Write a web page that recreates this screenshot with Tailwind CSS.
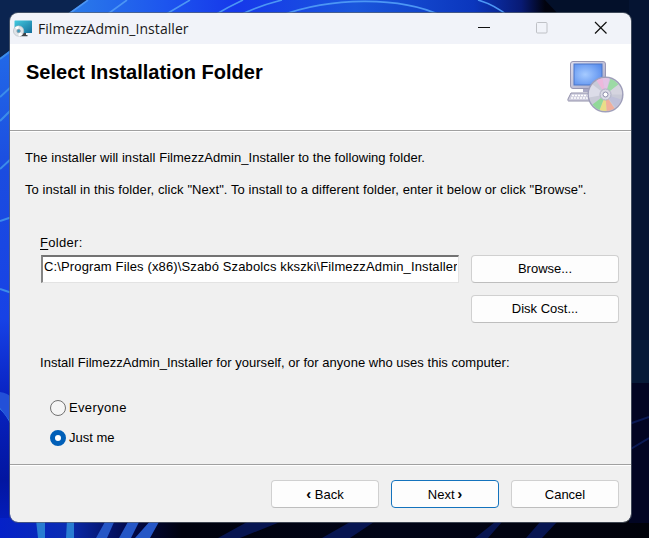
<!DOCTYPE html>
<html lang="en">
<head>
<meta charset="utf-8">
<title>FilmezzAdmin_Installer</title>
<script src="https://cdn.jsdelivr.net/npm/@tailwindcss/browser@4"></script>
</head>
<body class="relative w-[649px] h-[538px] overflow-hidden bg-[#03102a] font-['Liberation_Sans',Arial,sans-serif] text-[13px] text-black">
<!-- desktop wallpaper -->
<svg class="absolute inset-0" width="649" height="538" viewBox="0 0 649 538">
  <defs>
    <linearGradient id="top" x1="70" x2="545" y1="0" y2="0" gradientUnits="userSpaceOnUse"><stop offset="0" stop-color="#2a7be9"/><stop offset=".2" stop-color="#1d55ee"/><stop offset=".35" stop-color="#1638ea"/><stop offset=".6" stop-color="#1a56dc"/><stop offset=".85" stop-color="#0b36bd"/><stop offset=".95" stop-color="#081a74"/><stop offset="1" stop-color="#01030f"/></linearGradient>
    <linearGradient id="left" x1="0" x2="0" y1="50" y2="538" gradientUnits="userSpaceOnUse"><stop offset="0" stop-color="#2269e8"/><stop offset=".25" stop-color="#1b4ce0"/><stop offset=".55" stop-color="#1742e6"/><stop offset=".7" stop-color="#0924c4"/><stop offset=".88" stop-color="#0215a0"/><stop offset="1" stop-color="#0420c6"/></linearGradient>
    <linearGradient id="bot" x1="0" x2="649" y1="0" y2="0" gradientUnits="userSpaceOnUse"><stop offset="0" stop-color="#0521c8"/><stop offset=".1" stop-color="#0a2cb4"/><stop offset=".2" stop-color="#02094a"/><stop offset=".28" stop-color="#00020e"/><stop offset=".6" stop-color="#010417"/><stop offset="1" stop-color="#01020a"/></linearGradient>
  </defs>
  <path d="M0 0H100V60H0z" fill="#0b2450"/>
  <path d="M88 0H545L560 16H64z" fill="url(#top)"/>
  <g fill="none" stroke="#4c96f4" stroke-width="1.600"><path d="M88 0L66 16M127 0L105 16M190 0L163 16M243 0Q228 7 213 16M282 0Q258 6 238 16M280 16C330 -3 400 -4 442 16M478 0Q495 5 508 16"/></g>
  <path d="M0 58L12 49V538H0z" fill="url(#left)"/>
  <g fill="none" stroke="#3c8cea" stroke-width="2"><path d="M0 59L12 50M0 97L12 86M0 121L12 109M0 169L12 158M0 221L12 217M0 289L12 293M0 408Q7 414 12 425"/></g>
  <path d="M0 392Q8 393 12 398V424L0 408z" fill="#2350d8"/>
  <path d="M0 518H649V538H0z" fill="url(#bot)"/>
  <path d="M36 520H45V538H38zM67 520H74V538H66z" fill="#287cd2"/>
  <path d="M106 520H115L107 538H96zM129 520H140L131 538H119zM151 520H160L150 538H135z" fill="#2556c6"/>
  <path d="M247 522H280L240 538H218zM350 522H374L350 538H322zM495 522H502L488 538H475zM540 522H557L542 538H526z" fill="#071551"/>
  <path d="M629 0H649V383L629 382z" fill="#051432"/>
  <path d="M629 340H649V383H629z" fill="#071a38"/>
  <path d="M629 383H649V523H629z" fill="#020523"/>
  <path d="M629 450L649 438M629 424L649 417" stroke="#0b1a55" stroke-width="2"/>
</svg>

<main class="relative ml-[10px] mt-[13px] w-[621px] h-[509px] rounded-lg overflow-hidden bg-[#f0f0f0] flex flex-col outline outline-[#59636e]/70">
  <header class="h-[31px] shrink-0 bg-[#f1f3f9] flex items-center">
    <svg class="ml-[3px] shrink-0" width="20" height="18" viewBox="0 0 20 18">
      <defs><linearGradient id="scr" x1="0" y1="0" x2="1" y2="1"><stop stop-color="#43cbe0"/><stop offset="1" stop-color="#146f9c"/></linearGradient></defs>
      <rect x="1.500" y=".5" width="17.500" height="12.500" rx=".6" fill="url(#scr)"/>
      <path d="M9 13h4v2h1.500v1.200H7z" fill="#404449"/>
      <circle cx="5.600" cy="11" r="5.200" fill="#dfe3e7" stroke="#b1bac2" stroke-width=".6"/>
      <path d="M5.600 11L2 7.500A5 5 0 0 1 5.600 6zM5.600 11l4 3.400A5 5 0 0 1 5.600 16z" fill="#fff"/>
      <circle cx="5.600" cy="11" r="1.700" fill="#389abd" stroke="#8798a6" stroke-width=".8"/>
    </svg>
    <span class="ml-[5px] font-['Open_Sans',sans-serif] text-[14px] tracking-[0.05px] leading-5 text-[#191919] whitespace-nowrap">FilmezzAdmin_Installer</span>
    <svg class="ml-auto mr-[24px] mb-[1px] shrink-0" width="130" height="14" viewBox="0 0 130 14" fill="none">
      <path d="M1 6.500H13" stroke="#111"/>
      <rect x="59.500" y="1.500" width="10.500" height="10.500" rx="1" stroke="#bfc1c6"/>
      <path d="M118 1L129.500 12.500M129.500 1L118 12.500" stroke="#111" stroke-width="1.200"/>
    </svg>
  </header>

  <section class="h-[86px] shrink-0 bg-white flex justify-between pl-4 pr-[7px]">
    <h1 class="pt-[16px] text-[20px] leading-6 font-bold whitespace-nowrap">Select Installation Folder</h1>
    <svg class="mt-[15px]" width="58" height="56" viewBox="0 0 58 56">
      <defs>
        <radialGradient id="mon" cx=".4" cy=".5" r=".7"><stop stop-color="#a6cbff"/><stop offset="1" stop-color="#568bed"/></radialGradient>
        <linearGradient id="bez" x1="0" y1="0" x2="1" y2="1"><stop stop-color="#deddec"/><stop offset="1" stop-color="#a8a8c5"/></linearGradient>
      </defs>
      <path d="M17 28h19v5H17z" fill="#a9a8c4"/>
      <rect x="4.500" y="2.500" width="35" height="27" rx="2.500" fill="url(#bez)" stroke="#9897b3"/>
      <rect x="8" y="5" width="28" height="21" fill="url(#mon)" stroke="#4d76c8"/>
      <path d="M5 34H33V42H2.500Q1.500 42 2 40z" fill="#cfcede" stroke="#9291aa"/>
      <path d="M6 36.500H24M5 39H24" stroke="#fff" stroke-width="1.700" stroke-dasharray="2 1"/>
      <circle cx="39.500" cy="35.500" r="17.300" fill="#c9cad7" stroke="#9f9fba" stroke-width="1.500"/>
      <g transform="translate(39.500 35.500)">
        <path d="M0 0L-9 -14A16.600 16.600 0 0 1 -3 -16.300z" fill="#edb8dc"/>
        <path d="M0 0L-3 -16.300A16.600 16.600 0 0 1 4 -16z" fill="#e3c3e5"/>
        <path d="M0 0L5 -15.800A16.600 16.600 0 0 1 13 -10z" fill="#9cdaa5"/>
        <path d="M0 0L13 -10A16.600 16.600 0 0 1 16.600 0z" fill="#d5d4df"/>
        <path d="M0 0L15.800 5A16.600 16.600 0 0 1 10 13z" fill="#bfc0d9"/>
        <path d="M0 0L9 14A16.600 16.600 0 0 1 1 16.500z" fill="#f1ae9b"/>
        <path d="M0 0L1 16.500A16.600 16.600 0 0 1 -6 15.500z" fill="#e9dd88"/>
        <path d="M0 0L-6 15.500A16.600 16.600 0 0 1 -13 10z" fill="#91d998"/>
        <path d="M0 0L-16.400 3A16.600 16.600 0 0 1 -13 -10z" fill="#dcdce8"/>
      </g>
      <circle cx="39.500" cy="35.500" r="5.500" fill="#d8d9e4" stroke="#b0b1c6"/>
      <circle cx="39.500" cy="35.500" r="2.500" fill="#fff" stroke="#8c8dab"/>
    </svg>
  </section>
  <div class="h-[2px] shrink-0 bg-white border-t border-[#a0a0a0]"></div>

  <section class="h-[332px] shrink-0 pl-[15px] pr-3 flex flex-col">
    <p class="mt-[18px] leading-4 tracking-[0.045px] whitespace-nowrap">The installer will install FilmezzAdmin_Installer to the following folder.</p>
    <p class="mt-4 leading-4 tracking-[0.082px] whitespace-nowrap">To install in this folder, click "Next". To install to a different folder, enter it below or click "Browse".</p>
    <div class="mt-[37px] ml-[15px] leading-4 tracking-[0.3px]"><span class="underline underline-offset-2">F</span>older:</div>
    <div class="mt-[4px] ml-[16px] flex justify-between">
      <div class="w-[418px] h-[28px] bg-white border-t-2 border-l-2 border-t-[#737373] border-l-[#858585] border-b border-r border-b-[#e3e3e3] border-r-[#e3e3e3] overflow-hidden pl-px pr-px leading-4 whitespace-nowrap"><div class="overflow-hidden pt-[2px] tracking-[0.135px]">C:\Program Files (x86)\Szabó Szabolcs kkszki\FilmezzAdmin_Installer</div></div>
      <div class="flex flex-col gap-3">
        <button class="w-[148px] h-7 rounded-[4px] border border-[#d0d0d0] border-b-[#bebebe] bg-[#fdfdfd]">Browse...</button>
        <button class="w-[148px] h-7 rounded-[4px] border border-[#d0d0d0] border-b-[#bebebe] bg-[#fdfdfd]">Disk Cost...</button>
      </div>
    </div>
    <p class="mt-[32px] ml-[15px] leading-4 tracking-[0.025px] whitespace-nowrap">Install FilmezzAdmin_Installer for yourself, or for anyone who uses this computer:</p>
    <div class="mt-[29px] ml-[25px] flex flex-col gap-[14px] leading-4">
      <div class="flex items-center gap-[3px]"><span class="size-4 rounded-full border border-[#717171] bg-[#f5f5f5]"></span><span class="tracking-[0.35px]">Everyone</span></div>
      <div class="flex items-center gap-[3px]"><span class="size-4 rounded-full border-[5px] border-[#005fb8] bg-white"></span><span>Just me</span></div>
    </div>
  </section>
  <div class="h-[2px] shrink-0 bg-white border-t border-[#a0a0a0]"></div>
  <footer class="flex justify-end gap-3 pt-[14px] pr-3">
    <button class="w-[108px] h-7 rounded-[4px] border border-[#d0d0d0] border-b-[#bebebe] bg-[#fdfdfd] pt-px"><b class="text-[15px] leading-3">‹</b> Back</button>
    <button class="w-[108px] h-7 rounded-[4px] border border-[#1473bd] bg-[#fdfdfd] pt-px">Next <b class="-ml-px text-[15px] leading-3">›</b></button>
    <button class="w-[108px] h-7 rounded-[4px] border border-[#d0d0d0] border-b-[#bebebe] bg-[#fdfdfd] pt-px">Cancel</button>
  </footer>
</main>
</body>
</html>
